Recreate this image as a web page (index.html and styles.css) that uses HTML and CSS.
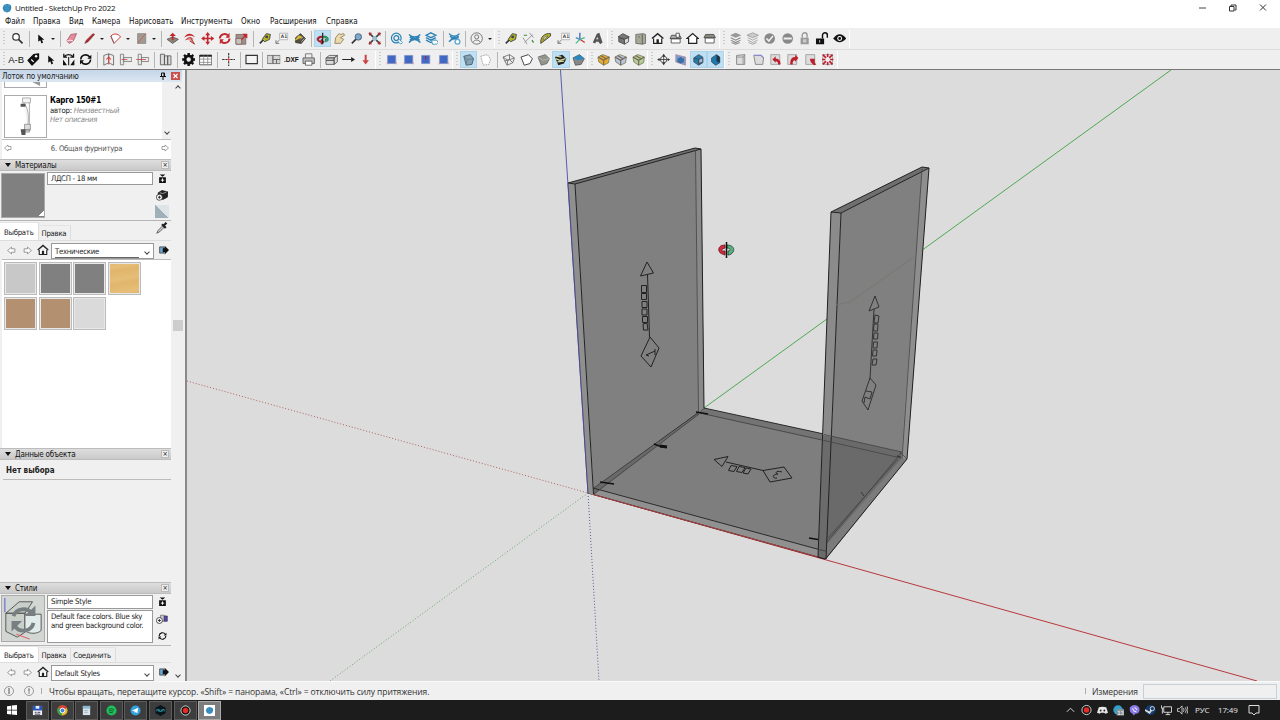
FILE: index.html
```html
<!DOCTYPE html>
<html lang="ru">
<head>
    <meta charset="UTF-8">
    <meta name="viewport" content="width=device-width, initial-scale=1.0">
    <title>Untitled - SketchUp Pro 2022</title>
    <link rel="stylesheet" href="styles.css">
</head>
<body>
    <!-- icon set, 16x16 -->
    <svg class="icon-defs" width="0" height="0">
        <symbol id="logo" viewBox="0 0 16 16"><path d="M8 1l6 2 1 5-2 5-5 2-5-2-2-5 2-5z" fill="#2d83b5"/><path d="M4 5l4-2 4 2-4 2zM4 8l4 2 4-2M4 11l4 2 4-2" fill="none" stroke="#5aa6d0"/></symbol>
        <symbol id="search" viewBox="0 0 16 16"><circle cx="6" cy="6" r="4" fill="#fff" stroke="#333" stroke-width="1.5"/><path d="M9 9l5 5" stroke="#333" stroke-width="2"/></symbol>
        <symbol id="cursor" viewBox="0 0 16 16"><path d="M5 3v9l2.500-2 1.500 4 2-1-1.500-3.500h3z" fill="#111"/></symbol>
        <symbol id="eraser" viewBox="0 0 16 16"><path d="M2 11l5-8 7-1-4 9-5 3z" fill="#e58b9c" stroke="#a3596a"/><path d="M2 11l4-1 4 1" fill="none" stroke="#fff"/></symbol>
        <symbol id="pencil" viewBox="0 0 16 16"><path d="M2 14l2-4 8-8 2 1-8 9z" fill="#b3272d" stroke="#6b2022" stroke-width=".7"/></symbol>
        <symbol id="arc" viewBox="0 0 16 16"><path d="M2 5c4-4 9-3 12 1L6 14z" fill="#fff" stroke="#c33" stroke-width="1.2"/><path d="M2 5l4 9" stroke="#666"/></symbol>
        <symbol id="rect" viewBox="0 0 16 16"><path d="M3 2h10v12H3z" fill="#a09a90" stroke="#888"/><path d="M3 14L13 2" stroke="#c55"/></symbol>
        <symbol id="pushpull" viewBox="0 0 16 16"><path d="M1 9l7-3 7 3-7 5z" fill="#8e8778" stroke="#555"/><path d="M7 10V5H4l4-4 4 4H9v5z" fill="#c1272d"/></symbol>
        <symbol id="follow" viewBox="0 0 16 16"><path d="M1 7c4-7 10-6 14 0-4-3-9-3-14 0z" fill="#c1272d"/><path d="M3 10c3-4 7-4 9-1M10 8l4 7-6-4" fill="#d88" stroke="#a22"/></symbol>
        <symbol id="move" viewBox="0 0 16 16"><path d="M8 0l3 4H9v3h3V5l4 3-4 3V9H9v3h2l-3 4-3-4h2V9H4v2L0 8l4-3v2h3V4H5z" fill="#c1272d"/></symbol>
        <symbol id="rotate" viewBox="0 0 16 16"><path d="M2 8a6 6 0 0 1 10-4M14 8A6 6 0 0 1 4 12" fill="none" stroke="#c1272d" stroke-width="2.4"/><path d="M14 1v6H9zM2 15V9h5z" fill="#c1272d"/></symbol>
        <symbol id="scale" viewBox="0 0 16 16"><path d="M1 3h12v12H1z" fill="#a08f84" stroke="#766"/><path d="M1 8h7v7H1z" fill="#c9c0b8" stroke="#766"/><path d="M7 9l4-4-2-3h6v6l-3-2-4 4z" fill="#c1272d"/></symbol>
        <symbol id="tape" viewBox="0 0 16 16"><path d="M5 9l5-7 5 1-1 6-6 3z" fill="#b5b52a" stroke="#333"/><circle cx="10.500" cy="6" r="1.800" fill="#444"/><path d="M6 10l-4 4" stroke="#333" stroke-width="2"/></symbol>
        <symbol id="label" viewBox="0 0 16 16"><path d="M5.500 1.500h10v8h-10z" fill="#fff" stroke="#aaa"/><path d="M1 14l4-4M1 14v-4M1 14h4" stroke="#666"/><text x="7" y="7.500" class="svg-label">A1</text></symbol>
        <symbol id="paint" viewBox="0 0 16 16"><path d="M3 7l6-5 6 6-5 6-7-1z" fill="#55503e" stroke="#333"/><path d="M1 11l6-7 5 2-6 3z" fill="#d8b93a"/><path d="M9 9l3-3M10 12l4-4" stroke="#bbb"/></symbol>
        <symbol id="orbit" viewBox="0 0 16 16"><path d="M7 5C3 5 1 7 1 9s2 3 5 4v2l4-3-4-3v2c-5-1-3-4 1-4z" fill="#c8202f" stroke="#700" stroke-width=".6"/><path d="M9 5c5 0 6 2 6 4s-1 3-4 3V9c3 0 2-2-2-2z" fill="#3ba566" stroke="#153" stroke-width=".6"/><path d="M8 1v14" stroke="#222" stroke-width="1.500"/></symbol>
        <symbol id="hand" viewBox="0 0 16 16"><path d="M2 14l1-7 4-5 2 1 4-1 1 2-5 3 4 2-4 5z" fill="#ead9ac" stroke="#8a7a50"/></symbol>
        <symbol id="zoom" viewBox="0 0 16 16"><circle cx="10" cy="6" r="4" fill="#7ba9cf" stroke="#456"/><path d="M7 9l-5 5" stroke="#333" stroke-width="2"/></symbol>
        <symbol id="extents" viewBox="0 0 16 16"><circle cx="8" cy="8" r="3" fill="#9bbbd2"/><path d="M1 1l5 5M15 1l-5 5M1 15l5-5M15 15l-5-5" stroke="#444" stroke-width="2"/><path d="M1 1h4L1 5zM15 1h-4l4 4zM1 15h4l-4-4zM15 15h-4l4-4z" fill="#c1272d"/></symbol>
        <symbol id="warehouse" viewBox="0 0 16 16"><circle cx="7.500" cy="7.500" r="6" fill="none" stroke="#2d83b5" stroke-width="1.500"/><circle cx="7.500" cy="7.500" r="3" fill="none" stroke="#2d83b5" stroke-width="1.500"/><path d="M9 11l2-2 4 4-2 2z" fill="#fff" stroke="#2d83b5"/></symbol>
        <symbol id="ext" viewBox="0 0 16 16"><path d="M1 3c4 4 10 4 14 0M3 8h10M1 13c4-5 10-5 14 0M2 6c4 3 8 3 12 0M2 10c4-3 8-3 12 0" fill="none" stroke="#2d83b5" stroke-width="1.700"/></symbol>
        <symbol id="stack" viewBox="0 0 16 16"><path d="M1 4l6-3 6 3-6 3zM1 7l6 3 6-3M1 10l6 3 6-3" fill="none" stroke="#2d83b5" stroke-width="1.700"/><path d="M8 10h6l2 3-2 2H9z" fill="#fff" stroke="#2d83b5"/></symbol>
        <symbol id="extgear" viewBox="0 0 16 16"><path d="M1 2c4 4 9 4 13 0M3 7h10M1 12c4-5 9-5 13 0M2 5c4 3 7 3 11 0" fill="none" stroke="#2d83b5" stroke-width="1.700"/><circle cx="11.500" cy="12" r="3" fill="#fff" stroke="#5aa6d0" stroke-width="1.500"/></symbol>
        <symbol id="user" viewBox="0 0 16 16"><circle cx="8" cy="8" r="7" fill="none" stroke="#777" stroke-width="1.200"/><circle cx="8" cy="6" r="2.500" fill="none" stroke="#777" stroke-width="1.200"/><path d="M3.500 13c1-4 8-4 9 0" fill="none" stroke="#777" stroke-width="1.200"/></symbol>
        <symbol id="dims" viewBox="0 0 16 16"><path d="M3 13L13 3M1 7l5 8M9 1l5 6" stroke="#888"/><path d="M2 4h4M12 10l2 3" stroke="#3a8a3a" stroke-width="1.500"/></symbol>
        <symbol id="protractor" viewBox="0 0 16 16"><path d="M2 14C1 6 7 1 14 2v3z" fill="#b5b52a" stroke="#333"/><path d="M5 10c0-4 3-5 6-5z" fill="#eee" stroke="#333" stroke-width=".6"/></symbol>
        <symbol id="axes" viewBox="0 0 16 16"><path d="M7 9V1" stroke="#2c62b0" stroke-width="1.500"/><path d="M7 9l6 4" stroke="#c33" stroke-width="1.500"/><path d="M7 9l-5 5M7 9l6-2" stroke="#4b8" stroke-width="1.500"/><path d="M2 7l5 2" stroke="#48c" stroke-width="1.500"/></symbol>
        <symbol id="text3d" viewBox="0 0 16 16"><path d="M2 13L7 2l3-1 4 12-3 2-2-3H6l-1 2z" fill="#555"/><path d="M6 9l1.500-3L9 9z" fill="#ddd"/></symbol>
        <symbol id="iso" viewBox="0 0 16 16"><path d="M1 6l6-4 8 4-6 3zM2 7v5l7 3V9z" fill="#777" stroke="#444"/><path d="M9 9l5-2v5l-5 3z" fill="#ddd" stroke="#444"/></symbol>
        <symbol id="topview" viewBox="0 0 16 16"><path d="M2 3l9-1 3 1v11l-4 1-8-1z" fill="#a7a796" stroke="#666"/><path d="M10 3v12M5 6h2" stroke="#555"/></symbol>
        <symbol id="house" viewBox="0 0 16 16"><path d="M3 8v6h10V8" fill="#fff" stroke="#222" stroke-width="1.500"/><path d="M1 8l7-6 7 6" fill="none" stroke="#222" stroke-width="1.800"/><path d="M6.500 9h3v5h-3z" fill="#222"/></symbol>
        <symbol id="houseback" viewBox="0 0 16 16"><path d="M1 8l7-6 7 6h-2v6H3V8z" fill="#fff" stroke="#222" stroke-width="1.500"/></symbol>
        <symbol id="side" viewBox="0 0 16 16"><path d="M1 7l2-4h10l2 4z" fill="#8a8a80" stroke="#444"/><path d="M2.500 7.500h11v6h-11z" fill="#fff" stroke="#444"/></symbol>
        <symbol id="sideright" viewBox="0 0 16 16"><path d="M1 8l2-4h10l2 4z" fill="#aaa" stroke="#444"/><path d="M8.500 1.500h4v5h-4zM2.500 8.500h11v5h-11z" fill="#fff" stroke="#444"/></symbol>
        <symbol id="layers" viewBox="0 0 16 16"><path d="M1 4l7-3 7 3-7 3z" fill="#999"/><path d="M2 7l6 3 6-3M2 10l6 3 6-3M3 13l5 2 5-2" fill="none" stroke="#888" stroke-width="1.300"/></symbol>
        <symbol id="layers2" viewBox="0 0 16 16"><path d="M1 4l7-3 7 3-7 3z" fill="#ccc" stroke="#999"/><path d="M2 7l6 3 6-3M2 10l6 3 6-3M3 13l5 2 5-2" fill="none" stroke="#999"/></symbol>
        <symbol id="check" viewBox="0 0 16 16"><circle cx="8" cy="8" r="6.500" fill="#888"/><path d="M4 8l3 3 5-6" fill="none" stroke="#eee" stroke-width="2"/></symbol>
        <symbol id="minus" viewBox="0 0 16 16"><circle cx="8" cy="8" r="6.500" fill="#888"/><path d="M3 8h10" stroke="#eee" stroke-width="2.500"/></symbol>
        <symbol id="lock" viewBox="0 0 16 16"><path d="M3 7h10v8H3z" fill="#999"/><path d="M5 7V4c0-4 6-4 6 0v3" fill="none" stroke="#999" stroke-width="1.700"/><path d="M6 9h4v4H6z" fill="#ccc"/></symbol>
        <symbol id="unlock" viewBox="0 0 16 16"><path d="M1 8h10v7H1z" fill="#111"/><path d="M9 8V4c0-4 6-4 6 0v3" fill="none" stroke="#111" stroke-width="1.800"/><path d="M5.500 10v3" stroke="#eee"/></symbol>
        <symbol id="eye" viewBox="0 0 16 16"><path d="M0 8c5-7 11-7 16 0-5 6-11 6-16 0z" fill="#111"/><circle cx="8" cy="8" r="3" fill="#fff"/><circle cx="8" cy="8" r="1.700" fill="#111"/></symbol>
        <symbol id="tag" viewBox="0 0 16 16"><path d="M1 9l7-7 6-1v6l-8 8z" fill="#111" stroke="#111" stroke-linejoin="round" stroke-width="1.500"/><circle cx="11" cy="4" r="1.500" fill="#fff"/><path d="M5 8l3 3" stroke="#fff" stroke-width="1.500"/></symbol>
        <symbol id="mirror" viewBox="0 0 16 16"><path d="M8 5v10" stroke="#111" stroke-width="1.300"/><path d="M2 5c3-4 9-4 12 0M2 1v4h4M14 1v4h-4" fill="none" stroke="#111" stroke-width="1.500"/><path d="M1 8v7h5zM15 8v7h-5z" fill="#111"/></symbol>
        <symbol id="sync" viewBox="0 0 16 16"><path d="M2 8a6 6 0 0 1 11-3M14 8A6 6 0 0 1 3 11" fill="none" stroke="#111" stroke-width="2"/><path d="M15 2v5h-5zM1 14V9h5z" fill="#111"/></symbol>
        <symbol id="fold" viewBox="0 0 16 16"><path d="M2 3l6-2v11l-6 3zM14 3L8 1v11l6 3z" fill="#eee" stroke="#777" stroke-width="1.200"/><path d="M8 14V5M5 8l3-3 3 3" fill="none" stroke="#d44" stroke-width="1.300"/></symbol>
        <symbol id="joint" viewBox="0 0 16 16"><path d="M1.500 1.500h4v13h-4zM5.500 5.500h10v5h-10z" fill="#e8e8e8" stroke="#777"/><path d="M3 8h7" stroke="#c44"/></symbol>
        <symbol id="joint2" viewBox="0 0 16 16"><path d="M2.500 1.500h4v13h-4zM6.500 5.500h9v5h-9z" fill="#e8e8e8" stroke="#777"/><path d="M0 8h12" stroke="#c44"/></symbol>
        <symbol id="panels" viewBox="0 0 16 16"><path d="M1.500 1.500h5v13h-5zM6.500 3.500h4v11h-4zM10.500 3.500h4v11h-4z" fill="#ddd" stroke="#555"/></symbol>
        <symbol id="gear" viewBox="0 0 16 16"><circle cx="8" cy="8" r="4.500" fill="none" stroke="#111" stroke-width="3.600"/><path d="M8 0v3M8 13v3M0 8h3M13 8h3M2.300 2.300l2 2M11.700 11.700l2 2M2.300 13.700l2-2M11.700 4.300l2-2" stroke="#111" stroke-width="3"/></symbol>
        <symbol id="table" viewBox="0 0 16 16"><path d="M.5 2.500h15v12H.5z" fill="#fff" stroke="#444"/><path d="M.5 3.500h15" stroke="#222" stroke-width="2"/><path d="M5.500 3v12M10.500 3v12M0 7.500h16M0 11.500h16" stroke="#888"/></symbol>
        <symbol id="cross" viewBox="0 0 16 16"><path d="M8 0v6M8 10v6M0 8h6M10 8h6" stroke="#333" stroke-dasharray="3 1" stroke-width="1.400"/><path d="M8 6v4M6 8h4" stroke="#d22"/></symbol>
        <symbol id="frame" viewBox="0 0 16 16"><path d="M1 3h14v10H1z" fill="#f4f4f4" stroke="#333" stroke-width="1.400"/></symbol>
        <symbol id="sheet" viewBox="0 0 16 16"><path d="M0 3h7v10H0zM7 3h9v5H7zM7 8h4.500v5H7zM11.500 8H16v5h-4.500z" fill="#d5d5d5" stroke="#666"/></symbol>
        <symbol id="print" viewBox="0 0 16 16"><path d="M4 1h8v6H4z" fill="#eee" stroke="#666"/><path d="M1 6h14v7H1z" fill="#bbb" stroke="#555"/><path d="M4 10h8v5H4z" fill="#fff" stroke="#555"/></symbol>
        <symbol id="box3" viewBox="0 0 16 16"><path d="M1 6l4-3h10l-4 3zM11 6l4-3v8l-4 3zM1 6h10v3H1zM1 9h10v5H1z" fill="#ddd" stroke="#555"/></symbol>
        <symbol id="arrow" viewBox="0 0 16 16"><path d="M0 8h11" stroke="#222" stroke-width="1.500"/><path d="M11 5l5 3-5 3z" fill="#222"/></symbol>
        <symbol id="down" viewBox="0 0 16 16"><path d="M8 2v8" stroke="#c44" stroke-width="2.500"/><path d="M4 9h8l-4 5z" fill="#c44"/></symbol>
        <symbol id="blue" viewBox="0 0 16 16"><path d="M3 3h10v10H3z" fill="#4169c4" stroke="#7f90c8"/><path d="M2.500 14v-3M13.500 14v-3" stroke="#d88"/></symbol>
        <symbol id="blue2" viewBox="0 0 16 16"><path d="M3 3h10v10H3z" fill="#4169c4" stroke="#7f90c8"/><path d="M8 4v4" stroke="#a24" stroke-width="1.500"/></symbol>
        <symbol id="cube-xray" viewBox="0 0 16 16"><path d="M2 4l8-2 4 5-2 7-7 1z" fill="#83a4b5" stroke="#456"/><path d="M2 4l4 4 8-1M6 8l-1 7" fill="none" stroke="#678"/></symbol>
        <symbol id="cube-dash" viewBox="0 0 16 16"><path d="M2 4l8-2 4 5-2 7-7 1z" fill="#fff" stroke="#999" stroke-dasharray="2 1"/></symbol>
        <symbol id="cube-wire" viewBox="0 0 16 16"><path d="M1 5l8-3 6 4-2 6-7 3zM1 5l6 4 8-3M7 9l-1 6M9 2v6l4 4M9 8l-6 2" fill="none" stroke="#666"/></symbol>
        <symbol id="cube-hidden" viewBox="0 0 16 16"><path d="M1 5l9-3 5 5-3 6-7 2z" fill="#fff" stroke="#444" stroke-width="1.200"/></symbol>
        <symbol id="cube-shade" viewBox="0 0 16 16"><path d="M1 5l9-3 5 5-3 6-7 2z" fill="#92958a" stroke="#666"/><path d="M1 5l6 4 8-2" fill="none" stroke="#bbb"/></symbol>
        <symbol id="cube-tex" viewBox="0 0 16 16"><path d="M1 5l9-3 5 5-3 6-7 2z" fill="#222"/><path d="M2 7l5 2 7-2M4 11l8-1M3 4l6 1" fill="none" stroke="#d8dba0" stroke-width="1.500"/></symbol>
        <symbol id="cube-mono" viewBox="0 0 16 16"><path d="M1 6l8-4 6 5-4 7-7 1z" fill="#888" stroke="#555"/><path d="M1 6l8-4 6 5-8 2z" fill="#2789c4"/></symbol>
        <symbol id="cube-gold" viewBox="0 0 16 16"><path d="M1 5l6-3 8 3-1 7-6 3-6-4z" fill="#e6ad2f" stroke="#775"/><path d="M1 5l7 4 7-4M8 9v6M4 3l7 4" fill="none" stroke="#765" stroke-width="1.400"/></symbol>
        <symbol id="cube-lilac" viewBox="0 0 16 16"><path d="M1 5l6-3 8 3-1 7-6 3-6-4z" fill="#b9c6e0" stroke="#775"/><path d="M1 5l7 4 7-4M8 9v6M4 3l7 4" fill="none" stroke="#765" stroke-width="1.400"/></symbol>
        <symbol id="cube-green" viewBox="0 0 16 16"><path d="M1 5l6-3 8 3-1 7-6 3-6-4z" fill="#b2cf98" stroke="#775"/><path d="M1 5l7 4 7-4M8 9v6M4 3l7 4" fill="none" stroke="#765" stroke-width="1.400"/></symbol>
        <symbol id="section" viewBox="0 0 16 16"><circle cx="8" cy="8" r="4" fill="#f4f4f4" stroke="#333"/><path d="M1 8h14M8 2v12" stroke="#333"/><path d="M0 8l3-2v4zM16 8l-3-2v4zM8 1l2 3H6zM8 15l2-3H6z" fill="#333"/></symbol>
        <symbol id="sec1" viewBox="0 0 16 16"><path d="M2 2l12 3v10L2 11z" fill="#7d9ccc" stroke="#b08aa8"/><path d="M4 7l4-2 4 2v4l-4 2-4-2z" fill="#386fa5"/></symbol>
        <symbol id="sec2" viewBox="0 0 16 16"><path d="M2 6l6-4 5 3v7l-5 3-6-4z" fill="#247da5" stroke="#446"/><path d="M8 8l5-2v5l-5 2z" fill="#9fc6d6" stroke="#445"/><path d="M2 6l6 2v6" fill="none" stroke="#445"/></symbol>
        <symbol id="sec3" viewBox="0 0 16 16"><path d="M3 6l6-4 4 3v7l-5 3-5-4z" fill="#1d7cae" stroke="#446"/><path d="M9 2l4 3v7l-4-2z" fill="#234"/></symbol>
        <symbol id="solid" viewBox="0 0 16 16"><path d="M3 3l10-1v12H3z" fill="#ddd" stroke="#777"/><path d="M3 5h8v9M11 5l2-3" fill="none" stroke="#888"/></symbol>
        <symbol id="solid2" viewBox="0 0 16 16"><path d="M2 3h9l3 3-1 8H4z" fill="#ddd" stroke="#777"/><path d="M2 3h9l3 3" fill="none" stroke="#88c" stroke-width="1.500"/></symbol>
        <symbol id="redl" viewBox="0 0 16 16"><path d="M2 2h11v12H2z" fill="#ddd" stroke="#999"/><path d="M4 8l4-4v3c5 0 6 3 6 7h-3c0-3-1-4-3-4v2z" fill="#bd1e2b"/></symbol>
        <symbol id="redr" viewBox="0 0 16 16"><path d="M2 2h11v12H2z" fill="#ddd" stroke="#999"/><path d="M15 6l-4-4v3c-5 0-6 4-6 9h3c0-4 1-5 3-5v2z" fill="#bd1e2b"/></symbol>
        <symbol id="redc" viewBox="0 0 16 16"><path d="M2 2h11v12H2z" fill="#ddd" stroke="#999"/><path d="M7 7h6v5l2 2-3 1-4-4z" fill="#bd1e2b"/></symbol>
        <symbol id="redx" viewBox="0 0 16 16"><path d="M2 2h12v12H2z" fill="#eee" stroke="#999"/><path d="M2 2l4 4M14 2l-4 4M2 14l4-4M14 14l-4-4M8 1v4M8 11v4M1 8h4M11 8h4" stroke="#bd1e2b" stroke-width="2"/></symbol>
        <symbol id="back" viewBox="0 0 16 16"><path d="M1 8l7-6v3h6v6H8v3z" fill="#fff" stroke="#777" stroke-width="1.300"/></symbol>
        <symbol id="fwd" viewBox="0 0 16 16"><path d="M15 8L8 2v3H2v6h6v3z" fill="#fff" stroke="#777" stroke-width="1.300"/></symbol>
        <symbol id="export" viewBox="0 0 16 16"><path d="M1 3h7v10H1z" fill="#6ea8d0" stroke="#222"/><path d="M6 5h3V1l7 7-7 7v-4H6z" fill="#111"/></symbol>
        <symbol id="pane" viewBox="0 0 16 16"><path d="M3 0h10L8 4zM2 5h12v10H2z" fill="#111"/><path d="M8 7v6M5 10h6" stroke="#fff" stroke-width="1.700"/></symbol>
        <symbol id="newmat" viewBox="0 0 16 16"><path d="M3 5l5-3 8 2-1 7-6 3-6-4z" fill="#222" stroke="#111"/><path d="M5 5l4 1 5-2" fill="none" stroke="#bbb"/><circle cx="4.500" cy="11" r="4" fill="#fff" stroke="#222"/><path d="M4.500 9v4M2.500 11h4" stroke="#222" stroke-width="1.200"/></symbol>
        <symbol id="newstyle" viewBox="0 0 16 16"><path d="M6 3h5v8H6z" fill="#ccc" stroke="#666"/><path d="M11 4h4v7h-4z" fill="#5546a8" stroke="#336"/><circle cx="4.500" cy="10" r="4" fill="#fff" stroke="#222"/><path d="M4.500 8v4M2.500 10h4" stroke="#222" stroke-width="1.200"/></symbol>
        <symbol id="dropper" viewBox="0 0 16 16"><path d="M1 15l2-4 7-7 2 2-7 7z" fill="#ccc" stroke="#444"/><path d="M8 3l5 5M10 5l4-4" stroke="#222" stroke-width="3"/></symbol>
    </svg>

    <div class="app">
        <div class="title-bar">
            <svg class="title-logo"><use href="#logo"/></svg>
            <span class="title-text">Untitled - SketchUp Pro 2022</span>
            <svg class="win-buttons" viewBox="0 0 80 14"><path d="M2 7h7" stroke="#444"/><path d="M32.500 5.500h4.500v4.500h-4.500zM34 5V4h5v5h-1.500" fill="none" stroke="#333"/><path d="M63 3.500l6 6M69 3.500l-6 6" stroke="#333"/></svg>
        </div>
        <div class="menu-bar">
            <span class="m1">Файл</span><span class="m2">Правка</span><span class="m3">Вид</span><span class="m4">Камера</span><span class="m5">Нарисовать</span><span class="m6">Инструменты</span><span class="m7">Окно</span><span class="m8">Расширения</span><span class="m9">Справка</span>
        </div>

        <div class="toolbar row-one">
            <i class="grip first"></i>
            <svg class="ic"><use href="#search"/></svg><i class="sep"></i>
            <svg class="ic"><use href="#cursor"/></svg><i class="caret"></i><i class="sep"></i>
            <svg class="ic"><use href="#eraser"/></svg>
            <svg class="ic"><use href="#pencil"/></svg><i class="caret"></i>
            <svg class="ic"><use href="#arc"/></svg><i class="caret"></i>
            <svg class="ic"><use href="#rect"/></svg><i class="caret"></i><i class="sep"></i>
            <svg class="ic"><use href="#pushpull"/></svg>
            <svg class="ic"><use href="#follow"/></svg>
            <svg class="ic"><use href="#move"/></svg>
            <svg class="ic"><use href="#rotate"/></svg>
            <svg class="ic"><use href="#scale"/></svg><i class="sep"></i>
            <svg class="ic"><use href="#tape"/></svg>
            <svg class="ic"><use href="#label"/></svg>
            <svg class="ic"><use href="#paint"/></svg><i class="sep"></i>
            <svg class="ic on"><use href="#orbit"/></svg>
            <svg class="ic"><use href="#hand"/></svg>
            <svg class="ic"><use href="#zoom"/></svg>
            <svg class="ic"><use href="#extents"/></svg><i class="sep"></i>
            <svg class="ic"><use href="#warehouse"/></svg>
            <svg class="ic"><use href="#ext"/></svg>
            <svg class="ic"><use href="#stack"/></svg><i class="sep"></i>
            <svg class="ic"><use href="#extgear"/></svg><i class="sep"></i>
            <svg class="ic"><use href="#user"/></svg><i class="caret"></i>
            <i class="grip"></i>
            <svg class="ic"><use href="#tape"/></svg>
            <svg class="ic"><use href="#dims"/></svg>
            <svg class="ic"><use href="#protractor"/></svg>
            <svg class="ic"><use href="#label"/></svg>
            <svg class="ic"><use href="#axes"/></svg>
            <svg class="ic"><use href="#text3d"/></svg>
            <i class="grip"></i>
            <svg class="ic"><use href="#iso"/></svg>
            <svg class="ic"><use href="#topview"/></svg>
            <svg class="ic"><use href="#house"/></svg>
            <svg class="ic"><use href="#sideright"/></svg>
            <svg class="ic"><use href="#houseback"/></svg>
            <svg class="ic"><use href="#side"/></svg>
            <i class="grip"></i>
            <svg class="ic"><use href="#layers"/></svg>
            <svg class="ic"><use href="#layers2"/></svg>
            <svg class="ic"><use href="#check"/></svg>
            <svg class="ic"><use href="#minus"/></svg>
            <svg class="ic"><use href="#lock"/></svg>
            <svg class="ic"><use href="#unlock"/></svg>
            <svg class="ic"><use href="#eye"/></svg>
            <i class="bar-end"></i>
        </div>
        <div class="toolbar row-two">
            <i class="grip first"></i>
            <span class="ic text-ic">A-B</span>
            <svg class="ic"><use href="#tag"/></svg>
            <svg class="ic"><use href="#cursor"/></svg>
            <svg class="ic"><use href="#mirror"/></svg>
            <svg class="ic"><use href="#sync"/></svg><i class="sep"></i>
            <svg class="ic"><use href="#fold"/></svg>
            <svg class="ic"><use href="#joint"/></svg>
            <svg class="ic"><use href="#joint2"/></svg><i class="sep"></i>
            <svg class="ic"><use href="#panels"/></svg><i class="sep"></i>
            <svg class="ic"><use href="#gear"/></svg>
            <svg class="ic"><use href="#table"/></svg><i class="sep"></i>
            <svg class="ic"><use href="#cross"/></svg><i class="sep"></i>
            <svg class="ic"><use href="#frame"/></svg><i class="sep"></i>
            <svg class="ic"><use href="#sheet"/></svg>
            <span class="ic text-ic dxf">.DXF</span>
            <svg class="ic"><use href="#print"/></svg><i class="sep"></i>
            <svg class="ic"><use href="#box3"/></svg>
            <svg class="ic"><use href="#arrow"/></svg>
            <svg class="ic"><use href="#down"/></svg>
            <i class="grip"></i>
            <svg class="ic"><use href="#blue"/></svg>
            <svg class="ic"><use href="#blue"/></svg>
            <svg class="ic"><use href="#blue2"/></svg>
            <svg class="ic"><use href="#blue"/></svg>
            <i class="grip"></i>
            <svg class="ic on"><use href="#cube-xray"/></svg>
            <svg class="ic"><use href="#cube-dash"/></svg><i class="sep"></i>
            <svg class="ic"><use href="#cube-wire"/></svg>
            <svg class="ic"><use href="#cube-hidden"/></svg>
            <svg class="ic"><use href="#cube-shade"/></svg>
            <svg class="ic on"><use href="#cube-tex"/></svg>
            <svg class="ic"><use href="#cube-mono"/></svg>
            <i class="grip"></i>
            <svg class="ic"><use href="#cube-gold"/></svg>
            <svg class="ic"><use href="#cube-lilac"/></svg>
            <svg class="ic"><use href="#cube-green"/></svg>
            <i class="grip"></i>
            <svg class="ic"><use href="#section"/></svg>
            <svg class="ic"><use href="#sec1"/></svg>
            <svg class="ic on"><use href="#sec2"/></svg>
            <svg class="ic on"><use href="#sec3"/></svg>
            <i class="grip"></i>
            <svg class="ic"><use href="#solid"/></svg>
            <svg class="ic"><use href="#solid2"/></svg>
            <svg class="ic"><use href="#redl"/></svg>
            <svg class="ic"><use href="#redr"/></svg>
            <svg class="ic"><use href="#redc"/></svg>
            <svg class="ic"><use href="#redx"/></svg>
            <i class="bar-end"></i>
        </div>

        <div class="main">
            <div class="tray">
                <div class="tray-title">
                    <span class="t-tray">Лоток по умолчанию</span>
                    <svg class="pin" viewBox="0 0 8 8"><path d="M2.500 1h3v3.500h-3zM1 4.500h6M4 5v3M5 1v3.500" fill="none" stroke="#111"/></svg>
                    <span class="close-red"><svg viewBox="0 0 8 8"><path d="M2 2l4 4M6 2l-4 4" stroke="#fff" stroke-width="1.200"/></svg></span>
                </div>
                <div class="tray-body">
                    <div class="panels">
                        <div class="components">
                            <div class="comp-list">
                                <div class="thumb cut"><svg viewBox="0 0 42 5"><path d="M28 0h8v4z" fill="#999"/></svg></div>
                                <div class="comp">
                                    <div class="thumb"><svg viewBox="0 0 42 42"><path d="M18 2h8v5h-8zM19 7c5 5 6 14 4 26M25 7v27" fill="#f4f4f4" stroke="#999" stroke-width=".8"/><path d="M20 29h6v6h-6zM18 35l7-1v3h-7z" fill="#ddd" stroke="#888" stroke-width=".8"/><path d="M16 8h5v3h-5zM16 34h5v6h-4z" fill="#555"/></svg></div>
                                    <div class="comp-info">
                                        <b>Карго 150#1</b>
                                        <span>автор: <em>Неизвестный</em></span>
                                        <em>Нет описания</em>
                                    </div>
                                </div>
                            </div>
                            <div class="comp-scroll"><i class="chev down"></i></div>
                        </div>
                        <div class="comp-nav">
                            <svg class="small"><use href="#back"/></svg><span>6. Общая фурнитура</span><svg class="small"><use href="#fwd"/></svg>
                        </div>

                        <div class="section-head"><i class="tri"></i><span>Материалы</span><i class="x">×</i></div>
                        <div class="preview">
                            <div class="swatch-big"></div>
                            <div class="fields"><div class="field">ЛДСП - 18 мм</div></div>
                            <div class="side-icons">
                                <svg><use href="#pane"/></svg>
                                <svg class="mid"><use href="#newmat"/></svg>
                                <i class="default-mat"></i>
                            </div>
                        </div>
                        <div class="tabs"><span class="tab active">Выбрать</span><span class="tab">Правка</span><svg class="dropper"><use href="#dropper"/></svg></div>
                        <div class="nav-row">
                            <svg><use href="#back"/></svg><svg><use href="#fwd"/></svg><svg class="home"><use href="#house"/></svg>
                            <div class="select"><span class="underlined">Технические</span><i class="chev down"></i></div>
                            <svg class="exp"><use href="#export"/></svg>
                        </div>
                        <div class="swatches">
                            <i class="sw s1"></i><i class="sw s2"></i><i class="sw s2"></i><i class="sw wood"></i>
                            <i class="sw s3"></i><i class="sw s3"></i><i class="sw s4"></i>
                        </div>

                        <div class="section-head"><i class="tri"></i><span>Данные объекта</span><i class="x">×</i></div>
                        <div class="entity"><b>Нет выбора</b></div>

                        <div class="section-head"><i class="tri"></i><span>Стили</span><i class="x">×</i></div>
                        <div class="preview styles-preview">
                            <div class="style-thumb">
                                <svg viewBox="0 0 44 47"><path d="M4 18l14-12h14l-8 12zM4 18h20v20L16 43 4 37z" fill="#c9d0ca" stroke="#555"/><path d="M24 19h17v17c-4 4-13 4-17 0z" fill="#e1ebea" stroke="#555"/><path d="M3 2v15" stroke="#55c"/><path d="M15 40l14 5" stroke="#d55"/><path d="M12 21c3-9 15-9 19-3M33 28c-2 9-14 11-19 4" fill="none" stroke="#777f80" stroke-width="4"/><path d="M35 10v11H24zM10 37V26h11z" fill="#777f80"/></svg>
                            </div>
                            <div class="fields">
                                <div class="field">Simple Style</div>
                                <div class="field desc">Default face colors. Blue sky<br>and green background color.</div>
                            </div>
                            <div class="side-icons">
                                <svg><use href="#pane"/></svg>
                                <svg class="mid"><use href="#newstyle"/></svg>
                                <svg><use href="#sync"/></svg>
                            </div>
                        </div>
                        <div class="tabs style-tabs"><span class="tab active">Выбрать</span><span class="tab">Правка</span><span class="tab">Соединить</span></div>
                        <div class="nav-row">
                            <svg><use href="#back"/></svg><svg><use href="#fwd"/></svg><svg class="home"><use href="#house"/></svg>
                            <div class="select"><span>Default Styles</span><i class="chev down"></i></div>
                            <svg class="exp"><use href="#export"/></svg>
                        </div>
                    </div>
                    <div class="tray-scroll"><i class="chev up"></i><i class="thumb-bar"></i><i class="chev down"></i></div>
                </div>
            </div>

            <svg class="viewport" viewBox="187 70 1093 611" preserveAspectRatio="none">
                <rect x="187" y="70" width="1093" height="611" fill="#dcdcdc"/>
                <!-- axes -->
                <g fill="none">
                    <path d="M560.500 70L588 493" stroke="#5a5aae"/>
                    <path d="M588 493L599 681" stroke="#5a5aa0" stroke-dasharray="1 2"/>
                    <path d="M704 408L1171 70" stroke="#4fa852"/>
                    <path d="M588 493L330 681" stroke="#6aa56a" stroke-dasharray="1 2"/>
                    <path d="M187 381L588 493" stroke="#b06060" stroke-dasharray="1 2"/>
                    <path d="M588 493L1257 681" stroke="#b8383c"/>
                </g>
                <!-- bottom board -->
                <path d="M704 408L824 434 904 451 907 458 822 558 588 493z" fill="#7e7e7e"/>
                <path d="M588 493L593 488 818 549.500 819 557.500z" fill="#909090"/>
                <path d="M704 408L824 434 822 440 699 413z" fill="#747474"/>
                <path d="M593 487L704 408 699 414 594 494z" fill="#686868"/>
                <g fill="none" stroke="#222" stroke-width=".9">
                    <path d="M704 408L824 434M593 488L819 549.500M588 493L825 559" />
                    <path d="M700 413L822 440M594 494L699 414" stroke="#444"/>
                    <path d="M593 488L704 408" stroke-width="1.500"/>
                </g>
                <path d="M593 494.500L818 557" stroke="#a84040"/>
                <!-- left board -->
                <path d="M568 183L575 184 593.500 489 593 495 588 493z" fill="#8f8f8f"/>
                <path d="M575 184L701 149 704 408 593.500 488z" fill="#808080"/>
                <path d="M695.500 151L701 149 704 408 698.500 413z" fill="#898989"/>
                <path d="M568 183L695 148 701 149 575 184z" fill="#6f6f6f"/>
                <g fill="none" stroke="#222">
                    <path d="M568 183L695 148 701 149 575 184zM575 184L593.500 494M701 149L704 408"/>
                    <path d="M695.500 150L698.500 412" stroke="#444" stroke-width=".8"/>
                    <path d="M568 183L588 493" stroke="#4b4b83"/>
                </g>
                <!-- right board -->
                <path d="M831 212L841 213 826 559 818 557z" fill="#8b8b8b"/>
                <path d="M841 213L929 168 907 459 826 559z" fill="#808080"/>
                <path d="M831 212L922 167 929 168 841 213z" fill="#6f6f6f"/>
                <path d="M922 171L929 168 907 459 901 459z" fill="#8e8e8e"/>
                <path d="M823 435L832 437 826 559 818 557z" fill="#6b6b6b"/>
                <path d="M832 436L902 452 901 460 826 550z" fill="#6a6a6a"/>
                <path d="M901 459L907 459 826 559 826 545z" fill="#7b7b7b"/>
                <g fill="none" stroke="#222">
                    <path d="M831 212L841 213 929 168 922 167zM831 212L818 557 825.500 559 907 459 929 168M841 213L826 559"/>
                    <path d="M922 169L902 459M824 434.500L902 452M822 440L901 458M901 453L827 542M898 459L828 538M907 459L899 451" stroke="#444" stroke-width=".8"/>
                    <path d="M818 549.500L826 551" stroke="#444"/>
                    <path d="M836 305L850 302 914 257" stroke="#6d7a68" stroke-width=".8"/>
                </g>
                <!-- fasteners -->
                <g stroke="#111" stroke-width="1.600">
                    <path d="M696 412l12 2M654 444l8 3M600 482l14 2M809 538l9 1.500"/>
                    <path d="M660 446l7 1" stroke-width="3"/>
                    <path d="M861 492l3 4M897 456l4 1" stroke="#333" stroke-width="1"/>
                </g>
                <!-- grain direction marks -->
                <g fill="none" stroke="#222">
                    <path d="M647 262l-6.500 14 13-3zM647.500 274.500l2 62.500M650 337l9 11-8 19-10-11z"/>
                    <path d="M641.500 285.500h5v7h-5zM641.500 293.500h5v6h-5zM642 301.500h5v6h-5zM642 309h5v6h-5zM642.500 316.500h5v6h-5zM643 324l4-1 1 7h-4.500z"/>
                    <path d="M655 349v6M655 351l-9 4 3 1"/>
                </g>
                <g fill="none" stroke="#333">
                    <path d="M875 296l4 11-10 4zM874 309l-4 70M870 378l6 7-8 25-6-9z"/>
                    <path d="M875 315l4 1-1 7h-4zM874 324h4l-.5 7h-4zM874 333h4l-.5 6h-4zM873.500 342h4l-.5 6h-4zM873 350h4l-.5 6h-4zM873 359h4l-1 6h-4z"/>
                    <path d="M866 391l6 1-2 7-5-2-1 6"/>
                </g>
                <g fill="none" stroke="#222">
                    <path d="M714 459.500l14-3-6 10zM726 462l37 8.500M763 470.500l21-3.500 8 11-22 4z"/>
                    <path d="M731 465.500l6 1-3 5-5.500-1zM739 466.500l6 1-3 5-5.500-1zM746 468l5 1-3 5-5-1z"/>
                    <path d="M782 472c-5-2-8 1-4 2-6 0-6 5-1 4"/>
                </g>
                <!-- orbit cursor -->
                <path d="M725 245c-5 0-7 3-6 6s4 3 6 4v-4h-3c-1-1 0-2 3-3z" fill="#d32b40" stroke="#611" stroke-width=".8"/>
                <path d="M727 245c6 0 8 4 6 7-1 2-3 3-5 3v-4c3 0 3-3-1-3z" fill="#5eb17f" stroke="#143" stroke-width=".8"/>
                <path d="M726.500 242v16" stroke="#111" stroke-width="1.500"/>
            </svg>
        </div>

        <div class="status-bar">
            <svg class="status-icons" viewBox="0 0 44 16"><circle cx="9" cy="8" r="4.500" fill="none" stroke="#999"/><path d="M9 7v4M8 6h2" stroke="#888" stroke-width="1.500"/><circle cx="29" cy="8" r="4.500" fill="none" stroke="#999"/><path d="M29 5v6M28 7h2" stroke="#888"/><path d="M41.500 5v6" stroke="#aaa"/></svg>
            <span class="hint">Чтобы вращать, перетащите курсор. «Shift» = панорама, «Ctrl» = отключить силу притяжения.</span>
            <i class="tick"></i><span class="measure-label">Измерения</span>
            <div class="measure-box"></div>
        </div>

        <div class="taskbar">
            <div class="start"><svg viewBox="0 0 12 12"><path d="M0 1.500l5-.7v5H0zM5.800.7L12 0v5.800H5.800zM0 6.500h5v5l-5-.7zM5.800 6.500H12V12l-6.200-.7z" fill="#fff"/></svg></div>
            <div class="app-btn"><svg viewBox="0 0 12 12"><path d="M1 1h10v10H1z" fill="#f2f2f2"/><path d="M1 1h10v5H1z" fill="#2a55b8"/><path d="M4 1h4v3H4z" fill="#e8eefc"/><path d="M3 8h2M6 8h3M3 10h6" stroke="#335"/></svg></div>
            <div class="app-btn"><svg viewBox="0 0 12 12"><circle cx="6" cy="6" r="5.500" fill="#e6b929"/><path d="M6 6L1 3a6 6 0 0 1 10 0z" fill="#d8402f"/><path d="M6 6L1 3a6 6 0 0 0 4 8.500z" fill="#35a04c"/><circle cx="6" cy="6" r="2.600" fill="#4a82e0" stroke="#fff"/></svg></div>
            <div class="app-btn"><svg viewBox="0 0 12 12"><path d="M2 1h8v10H2z" fill="#d8e4ea"/><path d="M2 1h8v3H2z" fill="#8bbad0"/><path d="M4 6h4M4 8h4" stroke="#789" stroke-dasharray="1 1"/></svg></div>
            <div class="app-btn"><svg viewBox="0 0 12 12"><circle cx="6" cy="6" r="5.500" fill="#1fc25a"/><path d="M3 4.500q3-1 6 .5M3 6.500q3-1 5 .5M3.500 8.500q2-1 4 .3" fill="none" stroke="#153"/></svg></div>
            <div class="app-btn"><svg viewBox="0 0 12 12"><circle cx="6" cy="6" r="5.500" fill="#32a0da"/><path d="M2 6l7-3-1 6-2-1.500L5 9V7z" fill="#fff"/></svg></div>
            <div class="app-btn"><svg viewBox="0 0 12 12"><path d="M6 0l5.500 3v6L6 12 .5 9V3z" fill="#08151c"/><path d="M2 7V5h2v2M5 5v2h2V5M8 7V5h2v2" fill="none" stroke="#38b7c8" stroke-width=".8"/></svg></div>
            <div class="app-btn"><svg viewBox="0 0 12 12"><circle cx="6" cy="6" r="5" fill="#111" stroke="#ddd"/><circle cx="6" cy="6" r="3" fill="#e22c25"/></svg></div>
            <div class="app-btn current"><svg viewBox="0 0 12 12"><path d="M0 0h12v12H0z" fill="#fff"/><use href="#logo" x="1.500" y="1.500" width="9" height="9"/></svg></div>
            <div class="sys-tray">
                <svg viewBox="0 0 12 12"><path d="M2 8l4-4 4 4" fill="none" stroke="#ddd"/></svg>
                <svg viewBox="0 0 12 12"><circle cx="6" cy="6" r="5" fill="#111" stroke="#ddd"/><circle cx="6" cy="6" r="3" fill="#e22c25"/></svg>
                <svg viewBox="0 0 12 12"><path d="M2 3q4-1 8 0l2 6-3 1-1-1H4l-1 1-3-1z" fill="#e8e8e8"/><circle cx="4" cy="6.500" r="1" fill="#222"/><circle cx="8" cy="6.500" r="1" fill="#222"/></svg>
                <svg viewBox="0 0 12 12"><circle cx="5.500" cy="6" r="5.200" fill="#32a0c8"/><path d="M4 5h8v7H4z" fill="#8a9499"/><text x="5" y="11" class="badge">13</text></svg>
                <svg viewBox="0 0 12 12"><path d="M1 3q5-5 10 0 2 7-4 7l-2 2-1-2q-4-1-3-7z" fill="#8a7ae8"/><path d="M4 4q0 4 4 4M6 3.500q2 0 2.500 2.500" fill="none" stroke="#fff"/></svg>
                <svg viewBox="0 0 12 12"><circle cx="6" cy="6" r="5.500" fill="#123c70"/><circle cx="8" cy="4.500" r="2.300" fill="none" stroke="#ddd"/><path d="M0 6l5 3 2-3" fill="none" stroke="#ddd" stroke-width="2"/></svg>
                <svg viewBox="0 0 12 12"><path d="M3 2.500h8.500v6H3zM5 11h5M7.500 8.500V11M.5 1v3h2M1.500 4v6" fill="none" stroke="#ddd"/></svg>
                <svg viewBox="0 0 12 12"><path d="M.5 4.500h2l3-3v9l-3-3h-2zM7 4q1.500 2 0 4M9 3q2.500 3 0 6M11 2q2 4 0 8" fill="none" stroke="#ddd" stroke-width=".9"/></svg>
            </div>
            <span class="lang">РУС</span>
            <span class="clock">17:49</span>
            <svg class="notif" viewBox="0 0 12 12"><path d="M1 1.500h10v7.500H8l-2 2-2-2H1z" fill="none" stroke="#ddd"/></svg>
        </div>
    </div>
</body>
</html>
```
FILE: styles.css
```css
* {
    box-sizing: border-box;
}

body {
    margin: 0;
    background: #fff;
    font-family: 'DejaVu Sans Condensed', 'DejaVu Sans', sans-serif;
    font-size: 8px;
    color: #222;
    overflow: hidden;
}

i {
    display: block;
    font-style: normal;
}

svg {
    display: block;
    flex: none;
}

.icon-defs {
    display: none;
}

.svg-label {
    font-size: 6px;
    font-weight: bold;
    fill: #444;
}

.app {
    width: 1280px;
    height: 720px;
    display: flex;
    flex-direction: column;
}

/* title and menu */
.title-bar {
    height: 15px;
    display: flex;
    align-items: center;
    padding-left: 2px;
}

.title-logo {
    width: 10px;
    height: 10px;
    margin-right: 3px;
}

.title-text {
    font-family: 'Open Sans', sans-serif;
    font-size: 8px;
    letter-spacing: -0.25px;
    color: #111;
}

.win-buttons {
    width: 80px;
    height: 14px;
    margin-left: auto;
    margin-right: 3px;
}

.menu-bar {
    height: 13px;
    padding-left: 5px;
    display: flex;
    align-items: center;
    color: #111;
    white-space: nowrap;
}

.m1 { width: 28px; }
.m2 { width: 36px; }
.m3 { width: 23px; }
.m4 { width: 37px; }
.m5 { width: 52px; }
.m6 { width: 60px; }
.m7 { width: 29px; }
.m8 { width: 56px; }
.m9 { width: 40px; }

/* toolbars */
.toolbar {
    background: #efefef;
    display: flex;
    align-items: center;
}

.row-one {
    height: 22px;
    border-bottom: 1px solid #dcdcdc;
}

.row-two {
    height: 19px;
}

.ic {
    width: 17.35px;
    height: 17px;
    padding: 2px;
    flex: none;
}

.ic.on {
    background: #bfdff3;
    outline: 1px solid #add3ea;
    outline-offset: -1px;
}

.text-ic {
    font-family: 'Liberation Sans', sans-serif;
    font-size: 9.5px;
    padding: 3px 0 0;
    line-height: 11px;
    display: flex;
    justify-content: center;
    white-space: nowrap;
    color: #111;
}

.dxf {
    font-size: 6.5px;
    font-weight: bold;
}

.sep {
    width: 5.4px;
    height: 16px;
    border-right: 1px solid #b5b5b5;
    margin-right: 2px;
    margin-left: -2px;
    flex: none;
}

.caret {
    width: 8.7px;
    flex: none;
}

.caret::after {
    content: '';
    display: block;
    width: 0;
    margin-left: 2px;
    border: 2px solid transparent;
    border-top-color: #222;
    border-bottom: 0;
}

.grip {
    width: 8px;
    height: 18px;
    flex: none;
    border-left: 1px solid #fff;
    background: repeating-linear-gradient(#ccc 0 1px, transparent 1px 3px) 3px 1px / 2px 15px no-repeat;
}

.grip.first {
    width: 9px;
    border: 0;
}

.row-two .first {
    width: 7.5px;
}

.bar-end {
    width: 2px;
    height: 18px;
    border-right: 1px solid #fff;
}

.main {
    height: 612px;
    display: flex;
    border-top: 1px solid #777;
}

/* tray */
.tray {
    width: 187px;
    flex: none;
    background: #f0f0f0;
    border-right: 2px solid #8a8a8a;
    display: flex;
    flex-direction: column;
}

.tray-title {
    height: 12px;
    width: 182px;
    padding-left: 2px;
    background: linear-gradient(#c4d6e8, #dbe6f1);
    display: flex;
    align-items: center;
}

.t-tray {
    width: 157px;
    letter-spacing: -0.15px;
}

.pin {
    width: 8px;
    height: 8px;
}

.close-red {
    width: 9px;
    height: 8px;
    margin-left: 4px;
    background: #c9504c;
}

.close-red svg {
    width: 9px;
    height: 8px;
}

.tray-body {
    height: 599px;
    display: flex;
}

.panels {
    width: 171px;
    flex: none;
    overflow: hidden;
    font-size: 7.7px;
    letter-spacing: -0.25px;
}

.tray-scroll {
    width: 13px;
    display: flex;
    flex-direction: column;
    align-items: center;
    padding: 4px 1px;
}

.thumb-bar {
    width: 10px;
    height: 11px;
    margin: 230px 0 auto;
    background: #cdcdcd;
}

.chev {
    width: 4px;
    height: 4px;
    border: solid #444;
    border-width: 1px 0 0 1px;
    transform: rotate(45deg);
    flex: none;
}

.chev.down {
    transform: rotate(225deg);
}

.components {
    height: 58px;
    margin-left: 2px;
    background: #fff;
    display: flex;
    border-bottom: 1px solid #bbb;
}

.comp-list {
    width: 160px;
    padding-left: 2px;
}

.thumb {
    width: 43px;
    height: 43px;
    border: 1px solid #aaa;
}

.thumb.cut {
    height: 6px;
    border-top: 0;
    margin-bottom: 7px;
}

.comp {
    display: flex;
}

.comp-info {
    padding: 1px 0 0 3px;
    line-height: 9.5px;
    display: flex;
    flex-direction: column;
    white-space: nowrap;
}

.comp-info b {
    font-size: 8px;
    letter-spacing: -0.2px;
    color: #000;
}

.comp-info em {
    color: #888;
}

.comp-scroll {
    width: 9px;
    background: #f0f0f0;
    display: flex;
    align-items: flex-end;
    justify-content: center;
    padding-bottom: 5px;
}

.comp-nav {
    height: 19px;
    margin-left: 2px;
    padding: 0 2px 3px;
    background: #fff;
    display: flex;
    align-items: center;
    justify-content: space-between;
    color: #555;
}

.small {
    width: 8px;
    height: 8px;
}

.section-head {
    height: 12px;
    background: linear-gradient(#dedede, #c9c9c9);
    border: 1px solid #bcbcbc;
    border-width: 1px 0;
    padding: 0 2px 0 5px;
    display: flex;
    align-items: center;
    color: #111;
    font-size: 8px;
    letter-spacing: -0.2px;
}

.tri {
    border: 3px solid transparent;
    border-top: 4px solid #111;
    border-bottom: 0;
    margin-right: 4px;
}

.section-head .x {
    width: 8px;
    height: 8px;
    margin-left: auto;
    background: #eee;
    border: 1px solid #bbb;
    line-height: 6px;
    text-align: center;
    font-size: 7px;
}

.preview {
    height: 50px;
    padding: 1px 0 0 1px;
    border-bottom: 1px solid #b5b5b5;
    display: flex;
}

.swatch-big {
    width: 44px;
    height: 45px;
    margin-top: 1px;
    border: 1px solid #aaa;
    background: linear-gradient(135deg, transparent 50%, #fff 50%) 37px 37px / 5px 5px no-repeat #808080;
}

.fields {
    width: 106px;
    margin-left: 2px;
}

.field {
    height: 13px;
    border: 1px solid #999;
    background: #fff;
    padding-left: 3px;
    line-height: 11px;
    white-space: nowrap;
}

.side-icons {
    width: 18px;
    display: flex;
    flex-direction: column;
    align-items: center;
    justify-content: space-between;
    padding: 2px 0;
}

.side-icons svg {
    width: 9px;
    height: 10px;
}

.side-icons .mid {
    width: 12px;
    height: 12px;
}

.default-mat {
    width: 14px;
    height: 13px;
    background: linear-gradient(45deg, #9fb0b8 50%, #dfe4e6 50%);
}

.tabs {
    height: 20px;
    display: flex;
    align-items: flex-end;
    border-bottom: 1px solid #ddd;
}

.tab {
    height: 15px;
    padding: 1px 4px 0 2px;
    line-height: 13px;
    white-space: nowrap;
    border-right: 1px solid #ddd;
    border-top: 1px solid #e4e4e4;
}

.tab.active {
    height: 18px;
    padding: 3px 5px 0 4px;
    background: #fff;
}

.dropper {
    width: 12px;
    height: 12px;
    margin: 0 3px 6px auto;
}

.nav-row {
    height: 18px;
    padding-left: 7px;
    display: flex;
    align-items: center;
}

.nav-row svg {
    width: 9px;
    height: 9px;
    margin-right: 7px;
}

.nav-row .home {
    width: 12px;
    height: 12px;
    margin: 0 2px 0 -2px;
}

.select {
    width: 103px;
    height: 16px;
    margin-top: 2px;
    padding: 1px 4px 0 3px;
    border: 1px solid #999;
    background: #fff;
    display: flex;
    align-items: center;
    justify-content: space-between;
    flex: none;
}

.underlined {
    width: 84px;
    height: 13px;
    padding-top: 2px;
    border-bottom: 1px solid #666;
}

.nav-row .exp {
    width: 10px;
    height: 10px;
    margin: 0 0 0 5px;
}

.swatches {
    height: 189px;
    margin-left: 2px;
    padding: 2px 0 0 2px;
    background: #fff;
    border-top: 1px solid #bbb;
    display: grid;
    grid-template-columns: repeat(4, 33px);
    grid-auto-rows: 33px;
    gap: 1.7px;
}

.sw {
    border: 1px solid #bbb;
    box-shadow: inset 0 0 0 1px #e8e8e8;
}

.s1 { background: #c8c8c8; }
.s2 { background: #808080; }
.s3 { background: #b39170; }
.s4 { background: #dadada; }

.wood {
    background: repeating-linear-gradient(170deg, #e3b970 0, #e6be78 5px, #e1b56b 9px, #e3b970 13px);
}

.entity {
    height: 122px;
    padding: 6px 0 0 3px;
}

.entity b {
    display: block;
    height: 13px;
    padding-left: 3px;
    font-size: 8px;
    letter-spacing: 0;
}

.entity::after {
    content: '';
    display: block;
    border-top: 1px solid #bbb;
}

.styles-preview {
    height: 52px;
}

.style-thumb {
    width: 44px;
    height: 47px;
    border: 1px solid #aaa;
    background: #d2d7d3;
}

.style-thumb svg {
    width: 42px;
    height: 45px;
}

.styles-preview .field {
    height: 14px;
    line-height: 12px;
}

.styles-preview .desc {
    height: 33px;
    margin-top: 1px;
    padding-top: 1px;
    line-height: 9px;
}

.styles-preview .side-icons {
    padding-bottom: 4px;
}

.style-tabs {
    height: 17px;
}

.style-tabs .active {
    height: 16px;
    padding-top: 2px;
}

.viewport {
    width: 1093px;
    height: 611px;
}

/* status bar */
.status-bar {
    height: 19px;
    background: #f0f0f0;
    border-top: 1px solid #fafafa;
    display: flex;
    align-items: center;
    color: #333;
    white-space: nowrap;
}

.status-icons {
    width: 44px;
    height: 16px;
    margin-right: 5px;
}

.hint {
    width: 1036px;
    font-family: 'Open Sans', sans-serif;
    font-size: 8.5px;
    letter-spacing: -0.1px;
}

.tick {
    width: 7px;
    height: 6px;
    border-left: 1px solid #aaa;
}

.measure-label {
    width: 51px;
    font-family: 'Open Sans', sans-serif;
    font-size: 8.5px;
    letter-spacing: -0.15px;
}

.measure-box {
    width: 134px;
    height: 15px;
    border: 1px solid #c5d0d8;
}

/* taskbar */
.taskbar {
    height: 20px;
    background: #1c1c1c;
    display: flex;
    align-items: center;
}

.start {
    width: 26px;
    padding-left: 7px;
}

.start svg {
    width: 10px;
    height: 10px;
}

.app-btn {
    width: 23px;
    height: 19px;
    margin-right: 1.6px;
    border: 1px solid #5c5c5c;
    background: #3d3d3d;
    display: flex;
    align-items: center;
    justify-content: center;
}

.app-btn svg {
    width: 11px;
    height: 11px;
}

.app-btn.current {
    background: #7d7d7d;
    border-color: #aaa;
}

.sys-tray {
    margin-left: auto;
    display: flex;
    gap: 5px;
}

.sys-tray svg {
    width: 11px;
    height: 12px;
}

.badge {
    font-size: 6px;
    fill: #fff;
}

.lang,
.clock {
    font-family: 'Open Sans', sans-serif;
    font-size: 8px;
    letter-spacing: -0.15px;
    line-height: 12px;
    padding-bottom: 1px;
    color: #e8e8e8;
}

.lang {
    width: 16px;
    margin-left: 7px;
}

.clock {
    width: 20px;
    margin-left: 7px;
}

.notif {
    width: 12px;
    height: 12px;
    margin: 0 20px 0 10px;
}
```
